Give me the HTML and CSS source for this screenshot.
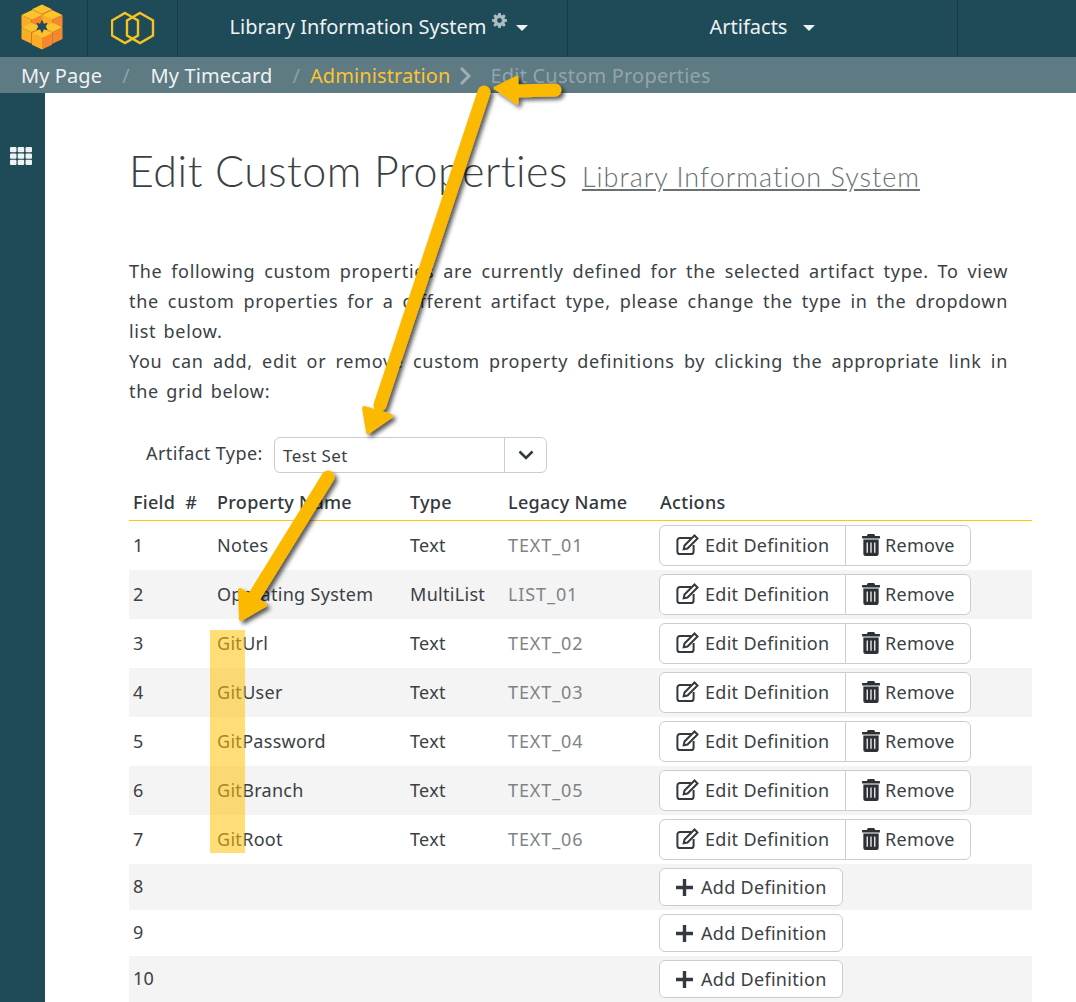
FILE: index.html
```html
<!DOCTYPE html>
<html lang="en">
<head>
  <meta charset="UTF-8" />
  <title>Edit Custom Properties</title>
  <link rel="stylesheet" href="styles.css">
</head>
<body>

<nav class="topbar">
  <a class="top-cell logo-cell">
    <svg width="42" height="47" viewBox="-22 -24 44 48">
      <defs>
        <g id="cube">
          <polygon points="0,-11 10.500,-6 0,-1 -10.500,-6" fill="#fdc32b"/>
          <polygon points="-10.500,-6 0,-1 0,11 -10.500,6" fill="#fbad25"/>
          <polygon points="10.500,-6 0,-1 0,11 10.500,6" fill="#f8872c"/>
        </g>
      </defs>
      <use href="#cube" x="0" y="-12"/>
      <use href="#cube" x="-11" y="-6"/>
      <use href="#cube" x="11" y="-6"/>
      <use href="#cube" x="-11" y="7"/>
      <use href="#cube" x="11" y="7"/>
      <use href="#cube" x="0" y="13"/>
      <polygon points="0,-7 2,-3 6,-4 4,0 6,4 2,3 0,7 -2,3 -6,4 -4,0 -6,-4 -2,-3" fill="#1f4a58"/>
    </svg>
  </a>
  <a class="top-cell mark-cell">
    <svg width="44" height="34" viewBox="0 0 44 34" fill="none" stroke="#f5c423" stroke-width="2.400">
      <polygon points="14,2 27,9.500 27,24.500 14,32 1,24.500 1,9.500"/>
      <polygon points="29,2 42,9.500 42,24.500 29,32 16,24.500 16,9.500"/>
    </svg>
  </a>
  <a class="top-cell project-cell">Library Information System<svg class="gear" width="15" height="15" viewBox="0 0 16 16"><path fill="#a9bcc2" d="M6.700 0h2.600l.4 2.200 1.200.5 1.900-1.300 1.800 1.800-1.300 1.900.5 1.200 2.200.4v2.600l-2.200.4-.5 1.200 1.300 1.900-1.800 1.800-1.900-1.300-1.200.5-.4 2.200H6.700l-.4-2.200-1.200-.5-1.900 1.300-1.800-1.800 1.300-1.900-.5-1.200L0 9.300V6.700l2.200-.4.5-1.200-1.300-1.900 1.800-1.800 1.900 1.300 1.200-.5zM8 5.400a2.600 2.600 0 1 0 0 5.200 2.600 2.600 0 0 0 0-5.200z"/></svg><span class="caret"></span></a>
  <a class="top-cell artifacts-cell">Artifacts<span class="caret"></span></a>
</nav>

<div class="crumbs">
  <a class="crumb">My Page</a>
  <span class="slash first">/</span>
  <a class="crumb">My Timecard</a>
  <span class="slash second">/</span>
  <a class="crumb crumb-active">Administration</a>
  <svg class="crumb-arrow" width="12" height="18" viewBox="0 0 12 18" fill="none" stroke="#9fb0b5" stroke-width="3"><path d="M2 1l8 8-8 8"/></svg>
  <span class="crumb-current">Edit Custom Properties</span>
</div>

<div class="layout">
  <aside class="sidebar">
    <svg width="22" height="18" viewBox="0 0 22 18" fill="#eef2f3">
      <rect x="0" y="0" width="6.500" height="5.300" rx="1"/><rect x="7.700" y="0" width="6.500" height="5.300" rx="1"/><rect x="15.500" y="0" width="6.500" height="5.300" rx="1"/>
      <rect x="0" y="6.400" width="6.500" height="5.300" rx="1"/><rect x="7.700" y="6.400" width="6.500" height="5.300" rx="1"/><rect x="15.500" y="6.400" width="6.500" height="5.300" rx="1"/>
      <rect x="0" y="12.700" width="6.500" height="5.300" rx="1"/><rect x="7.700" y="12.700" width="6.500" height="5.300" rx="1"/><rect x="15.500" y="12.700" width="6.500" height="5.300" rx="1"/>
    </svg>
  </aside>

  <main class="content">
    <h1 class="title">Edit Custom Properties <a class="title-link">Library Information System</a></h1>

    <p class="intro">The following custom properties are currently defined for the selected artifact type. To view the custom properties for a different artifact type, please change the type in the dropdown list below.<br>You can add, edit or remove custom property definitions by clicking the appropriate link in the grid below:</p>

    <div class="type-row">
      <label class="type-label">Artifact Type:</label>
      <div class="type-select">
        <span class="type-value">Test Set</span>
        <span class="type-btn"><svg width="16" height="10" viewBox="0 0 16 10" fill="none" stroke="#2f3a40" stroke-width="2.600"><path d="M1.500 1.500L8 8l6.500-6.500"/></svg></span>
      </div>
    </div>

    <table class="grid">
      <thead>
        <tr><th class="c-num">Field #</th><th class="c-name">Property Name</th><th class="c-type">Type</th><th class="c-legacy">Legacy Name</th><th>Actions</th></tr>
      </thead>
      <tbody id="rows"></tbody>
    </table>
  </main>
</div>

<svg class="overlay" width="1076" height="1002" viewBox="0 0 1076 1002">
  <defs>
    <filter id="shadow" x="-30%" y="-30%" width="160%" height="160%">
      <feDropShadow dx="3" dy="3" stdDeviation="2" flood-color="#000" flood-opacity="0.65"/>
    </filter>
  </defs>
  <rect x="210" y="630" width="35" height="223" fill="#ffc107" opacity="0.55"/>
  <g fill="#fbb900" stroke="#fbb900" stroke-linecap="round" stroke-linejoin="round" filter="url(#shadow)">
    <path d="M555 90L512 91" stroke-width="13" fill="none"/>
    <path d="M495 88L517 77L517 103Z" stroke-width="3"/>
    <path d="M484 92L380 405" stroke-width="13" fill="none"/>
    <path d="M368 432L364 408L391 416Z" stroke-width="4"/>
    <path d="M328 477L254 597" stroke-width="13" fill="none"/>
    <path d="M241 619L240 590L265 605Z" stroke-width="4"/>
  </g>
</svg>

<script>
  const rows = [
    ["1", "Notes", "Text", "TEXT_01"],
    ["2", "Operating System", "MultiList", "LIST_01"],
    ["3", "GitUrl", "Text", "TEXT_02"],
    ["4", "GitUser", "Text", "TEXT_03"],
    ["5", "GitPassword", "Text", "TEXT_04"],
    ["6", "GitBranch", "Text", "TEXT_05"],
    ["7", "GitRoot", "Text", "TEXT_06"],
    ["8"], ["9"], ["10"]
  ];

  const editIcon = '<svg class="ico" width="23" height="21" viewBox="0 0 23 21" fill="none" stroke="#33393d" stroke-width="2"><path d="M15 4H4a2.600 2.600 0 0 0-2.600 2.600v10.800A2.600 2.600 0 0 0 4 20h11a2.600 2.600 0 0 0 2.600-2.600V11"/><path d="M8.500 11.500L18.500 1.500l3 3-10 10-3.800.8z"/></svg>';
  const trashIcon = '<svg class="ico" width="18" height="22" viewBox="0 0 17 21"><path fill="#2c3135" d="M5.500 0h6l1 2H17v2.300H0V2h4.500zM1.200 5.300h14.600V19a2 2 0 0 1-2 2H3.200a2 2 0 0 1-2-2zM4.300 8v10h1.200V8zm3.600 0v10h1.200V8zm3.600 0v10h1.200V8z"/></svg>';
  const plusIcon = '<svg class="ico" width="17" height="17" viewBox="0 0 17 17"><path fill="#33393d" d="M6.800 0h3.400v6.800H17v3.400h-6.800V17H6.800v-6.800H0V6.800h6.800z"/></svg>';

  const tbody = document.getElementById("rows");
  rows.forEach((r) => {
    const tr = document.createElement("tr");
    if (r.length > 1) {
      tr.innerHTML = `<td>${r[0]}</td><td>${r[1]}</td><td>${r[2]}</td><td class="legacy">${r[3]}</td>
        <td class="actions"><div class="btn-group"><a class="btn btn-edit">${editIcon}Edit Definition</a><a class="btn btn-remove">${trashIcon}Remove</a></div></td>`;
    } else {
      tr.className = "row-empty";
      tr.innerHTML = `<td>${r[0]}</td><td></td><td></td><td></td>
        <td class="actions"><a class="btn btn-add">${plusIcon}Add Definition</a></td>`;
    }
    tbody.appendChild(tr);
  });
</script>

</body>
</html>
```

FILE: styles.css
```css
html, body {
  margin: 0;
  padding: 0;
  height: 1002px;
  overflow: hidden;
}

body {
  position: relative;
  font-family: "Noto Sans", sans-serif;
  font-size: 18px;
  letter-spacing: 0.3px;
  color: #3a4145;
  background: #fff;
}

.topbar {
  display: flex;
  height: 57px;
  background: #1f4a58;
  color: #eef2f3;
  font-size: 20px;
  letter-spacing: 0;
}

.top-cell {
  display: flex;
  align-items: center;
  justify-content: center;
  box-sizing: border-box;
  border-right: 1px solid #163a47;
  height: 57px;
}

.logo-cell { width: 88px; padding: 0 3px 4px 0; }
.mark-cell { width: 90px; padding-bottom: 2px; }
.project-cell { width: 390px; padding: 0 0 4px 13px; }
.artifacts-cell { width: 390px; padding: 0 0 4px 0; }

.gear {
  margin: 0 0 12px 6px;
}

.caret {
  display: inline-block;
  width: 0;
  height: 0;
  margin-left: 9px;
  margin-top: 2px;
  border-left: 6px solid transparent;
  border-right: 6px solid transparent;
  border-top: 6px solid #eef2f3;
}

.artifacts-cell .caret { margin-left: 16px; }

.crumbs {
  display: flex;
  align-items: center;
  height: 36px;
  padding-left: 21px;
  background: #5e7a83;
  color: #eef2f3;
  font-size: 20px;
  letter-spacing: 0;
}

.crumb { letter-spacing: 0.1px; }
.slash { color: #8ea2a8; }
.slash.first { margin: 0 21px 0 20px; }
.slash.second { margin: 0 10px 0 20px; }
.crumb-active { color: #fbc531; }
.crumb-arrow { margin: 1px 0 0 8px; }
.crumb-current { margin-left: 20px; color: #92a5ab; letter-spacing: 0.2px; }

.layout {
  display: flex;
  height: 909px;
}

.sidebar {
  flex: 0 0 45px;
  box-sizing: border-box;
  padding: 53px 0 0 10px;
  background: #1f4a58;
}

.content {
  flex: 1;
  padding-left: 84px;
  min-width: 0;
}

.title {
  margin: 46px 0 0 0;
  font-family: Lato, sans-serif;
  font-size: 43px;
  font-weight: 300;
  line-height: 64px;
  letter-spacing: 0.5px;
  color: #3a4145;
  white-space: nowrap;
}

.title-link {
  margin-left: 2px;
  font-size: 27px;
  letter-spacing: 1px;
  color: #6a7175;
  text-decoration: underline;
}

.intro {
  width: 879px;
  margin: 47px 0 0;
  line-height: 30px;
  letter-spacing: 0.7px;
  word-spacing: 2px;
  text-align: justify;
}

.type-row {
  display: flex;
  align-items: center;
  margin: 31px 0 0 17px;
}

.type-label { width: 128px; padding-bottom: 4px; letter-spacing: 0.4px; }

.type-select {
  display: flex;
  width: 273px;
  height: 36px;
  box-sizing: border-box;
  border: 1px solid #ccc;
  border-radius: 6px;
  font-size: 17px;
  letter-spacing: 0.4px;
}

.type-value {
  flex: 1;
  padding: 6px 0 0 8px;
}

.type-btn {
  display: flex;
  align-items: center;
  justify-content: center;
  width: 41px;
  border-left: 1px solid #ccc;
}

.grid {
  width: 903px;
  margin-top: 11px;
  border-collapse: separate;
  border-spacing: 0;
  table-layout: fixed;
}

.grid th {
  height: 37px;
  padding: 0 4px;
  box-sizing: border-box;
  border-bottom: 1px solid #ffc800;
  text-align: left;
  font-weight: 500;
  color: #33393d;
}

.c-num { width: 84px; word-spacing: 5px; }
.c-name { width: 193px; }
.c-type { width: 98px; }
.c-legacy { width: 151px; }

.grid th:last-child { padding-left: 5px; }

.grid td {
  height: 49px;
  padding: 0 4px 2px 4px;
  box-sizing: border-box;
}

.grid td.actions { padding-bottom: 0; }

.grid tbody tr:nth-child(even) { background: #f4f4f4; }
.grid tr.row-empty td { height: 46px; }

.legacy { color: #7d8387; letter-spacing: 0.9px; }

.btn-group { display: flex; }

.btn {
  display: inline-flex;
  align-items: center;
  box-sizing: border-box;
  height: 41px;
  border: 1px solid #ccc;
  background: #fff;
  color: #3a4145;
}

.btn-edit {
  width: 187px;
  padding: 0 0 2px 16px;
  border-radius: 6px 0 0 6px;
}

.btn-remove {
  width: 126px;
  padding: 0 0 2px 16px;
  margin-left: -1px;
  border-radius: 0 6px 6px 0;
}

.btn-add {
  width: 184px;
  height: 38px;
  padding-left: 16px;
  border-radius: 6px;
  vertical-align: middle;
}

.ico { flex: none; margin-right: 6px; }
.btn-remove .ico { margin-right: 5px; }
.btn-add .ico { margin-right: 8px; }

.overlay {
  position: absolute;
  top: 0;
  left: 0;
  pointer-events: none;
}
```
